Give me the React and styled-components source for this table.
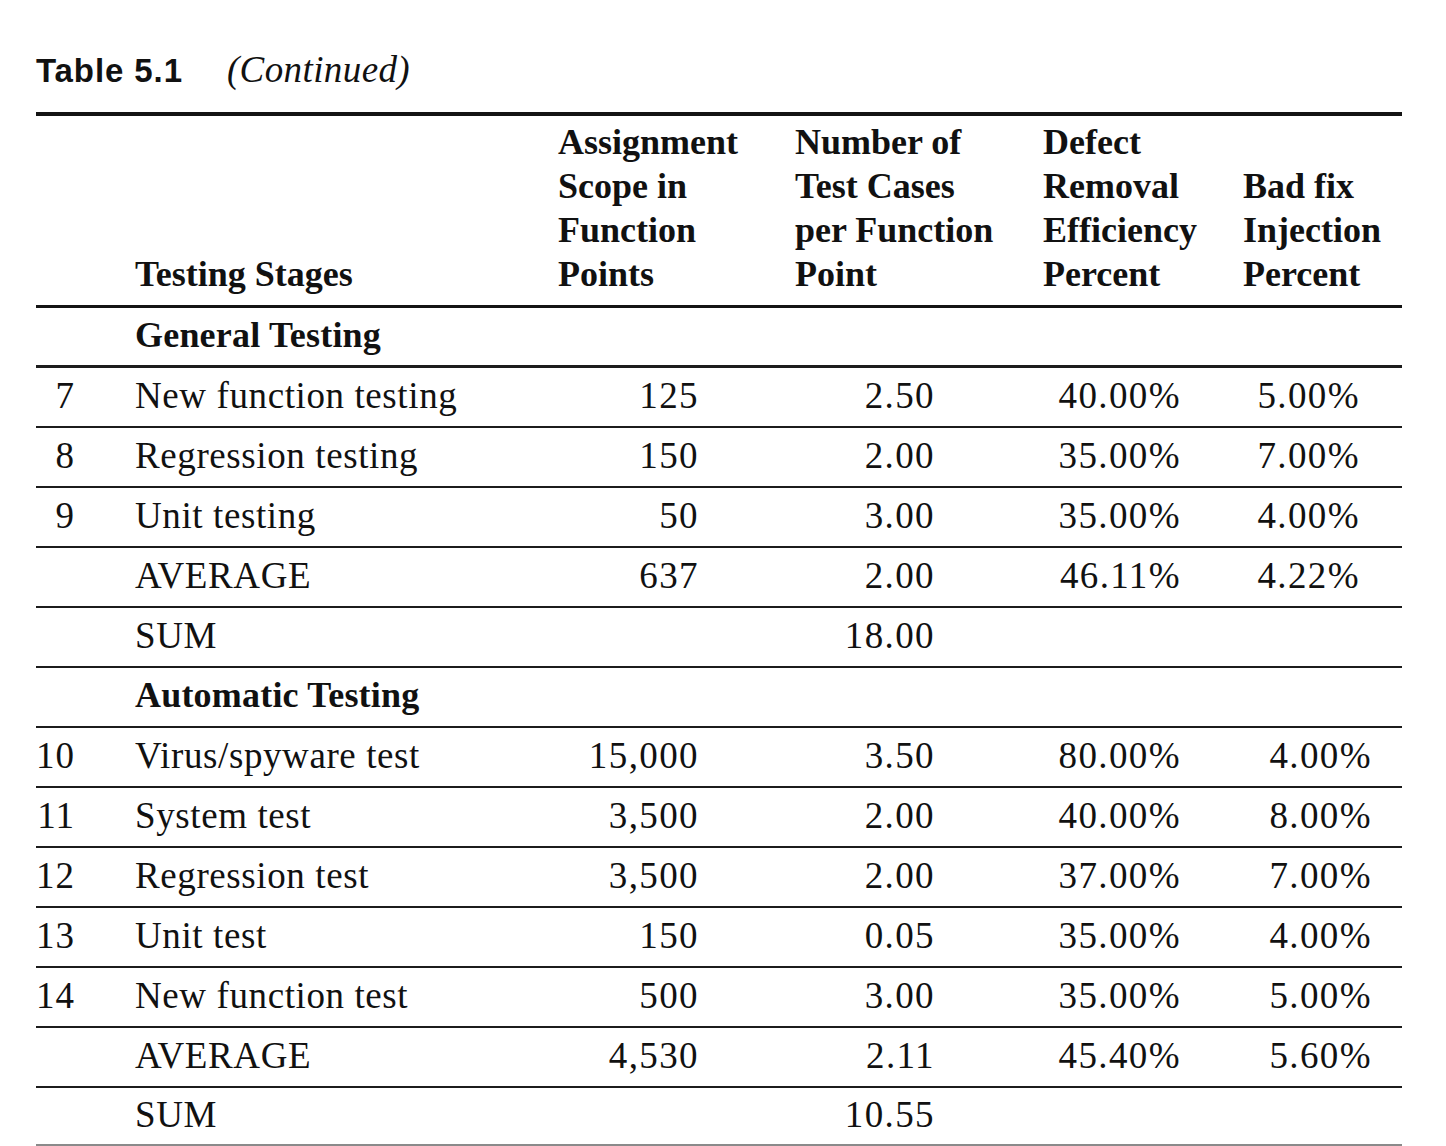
import React from "react";
import styled, { createGlobalStyle } from "styled-components";

const GlobalStyle = createGlobalStyle`
  html, body { margin: 0; padding: 0; background: #ffffff; }
  body { color: #111111; }
`;

const COLS = "99px 423px 237px 248px 200px 159px";
const SERIF = `"Liberation Serif", "Times New Roman", serif`;

const Page = styled.div`
  width: 1366px;
  padding: 0 44px 0 36px;
`;

const Caption = styled.div`
  display: flex;
  align-items: baseline;
  gap: 44px;
  height: 40px;
  padding-top: 50px;
  margin-bottom: 22px;
`;

const TableLabel = styled.span`
  font-family: "Liberation Sans", Arial, sans-serif;
  font-weight: 700;
  font-size: 33px;
  letter-spacing: 0.9px;
  line-height: 40px;
  color: #111;
`;

const ContinuedLabel = styled.span`
  font-family: ${SERIF};
  font-style: italic;
  font-size: 37px;
  letter-spacing: 0.4px;
  line-height: 40px;
  color: #111;
`;

const Table = styled.div`
  border-top: 4px solid #141414;
  font-family: ${SERIF};
  font-size: 37px;
  color: #111;
`;

const HeaderRow = styled.div`
  display: grid;
  grid-template-columns: ${COLS};
  align-items: end;
  padding: 4px 0 9px;
  border-bottom: 3px solid #141414;
`;

const HeaderCell = styled.div`
  font-weight: 700;
  font-size: 36px;
  line-height: 44px;
  grid-column: ${(p) => p.$col};
  white-space: nowrap;
`;

const Row = styled.div`
  display: grid;
  grid-template-columns: ${COLS};
  align-items: center;
  height: ${(p) => p.$h || 58}px;
  border-bottom: ${(p) => p.$rule || 2}px solid ${(p) => p.$ruleColor || "#1c1c1c"};
`;

const NumCell = styled.div`
  text-align: right;
  padding-right: 60px;
  letter-spacing: 1px;
  line-height: 41px;
  padding-bottom: 3px;
`;

const StageCell = styled.div`
  font-weight: ${(p) => (p.$bold ? 700 : 400)};
  font-size: ${(p) => (p.$bold ? 36 : 37)}px;
  letter-spacing: ${(p) => (p.$bold ? 0.2 : 0.6)}px;
  line-height: 41px;
  padding-bottom: 3px;
  white-space: nowrap;
`;

const ValueCell = styled.div`
  text-align: right;
  padding-right: ${(p) => p.$pr}px;
  letter-spacing: 1.4px;
  line-height: 41px;
  padding-bottom: 3px;
  white-space: nowrap;
`;

const headers = [
  { col: 2, lines: ["Testing Stages"] },
  { col: 3, lines: ["Assignment", "Scope in", "Function", "Points"] },
  { col: 4, lines: ["Number of", "Test Cases", "per Function", "Point"] },
  { col: 5, lines: ["Defect", "Removal", "Efficiency", "Percent"] },
  { col: 6, lines: ["Bad fix", "Injection", "Percent"] },
];

const groups = [
  {
    title: "General Testing",
    titleRule: 3,
    titleH: 57,
    lastPad: 42,
    rows: [
      ["7", "New function testing", "125", "2.50", "40.00%", "5.00%"],
      ["8", "Regression testing", "150", "2.00", "35.00%", "7.00%"],
      ["9", "Unit testing", "50", "3.00", "35.00%", "4.00%"],
      ["", "AVERAGE", "637", "2.00", "46.11%", "4.22%"],
      ["", "SUM", "", "18.00", "", ""],
    ],
  },
  {
    title: "Automatic Testing",
    titleRule: 2,
    titleH: 58,
    lastPad: 30,
    rows: [
      ["10", "Virus/spyware test", "15,000", "3.50", "80.00%", "4.00%"],
      ["11", "System test", "3,500", "2.00", "40.00%", "8.00%"],
      ["12", "Regression test", "3,500", "2.00", "37.00%", "7.00%"],
      ["13", "Unit test", "150", "0.05", "35.00%", "4.00%"],
      ["14", "New function test", "500", "3.00", "35.00%", "5.00%"],
      ["", "AVERAGE", "4,530", "2.11", "45.40%", "5.60%"],
      ["", "SUM", "", "10.55", "", ""],
    ],
  },
];

export default function App() {
  return (
    <Page>
      <GlobalStyle />
      <Caption>
        <TableLabel>Table 5.1</TableLabel>
        <ContinuedLabel>(Continued)</ContinuedLabel>
      </Caption>
      <Table>
        <HeaderRow>
          {headers.map((h) => (
            <HeaderCell key={h.col} $col={h.col}>
              {h.lines.map((l) => (
                <div key={l}>{l}</div>
              ))}
            </HeaderCell>
          ))}
        </HeaderRow>
        {groups.map((g, gi) => (
          <React.Fragment key={g.title}>
            <Row $h={g.titleH} $rule={g.titleRule}>
              <NumCell />
              <StageCell $bold>{g.title}</StageCell>
            </Row>
            {g.rows.map((r, ri) => {
              const isLast = gi === groups.length - 1 && ri === g.rows.length - 1;
              return (
                <Row
                  key={r[1] + ri}
                  $h={isLast ? 56 : 58}
                  $ruleColor={isLast ? "#8a8a8a" : undefined}
                >
                  <NumCell>{r[0]}</NumCell>
                  <StageCell>{r[1]}</StageCell>
                  <ValueCell $pr={96}>{r[2]}</ValueCell>
                  <ValueCell $pr={108}>{r[3]}</ValueCell>
                  <ValueCell $pr={62}>{r[4]}</ValueCell>
                  <ValueCell $pr={g.lastPad}>{r[5]}</ValueCell>
                </Row>
              );
            })}
          </React.Fragment>
        ))}
      </Table>
    </Page>
  );
}
